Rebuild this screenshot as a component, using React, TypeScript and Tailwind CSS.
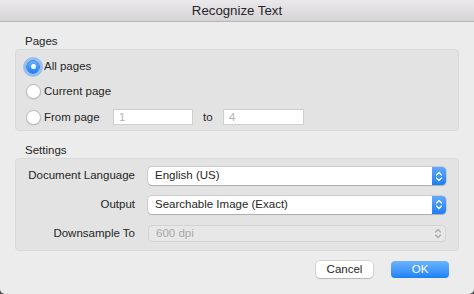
import React from "react";

const font = { fontFamily: '"Liberation Sans", Arial, sans-serif' };

function Radio({ checked }: { checked?: boolean }) {
  if (checked) {
    return (
      <div className="w-[14px] h-[14px] rounded-full shadow-[0_0_0_3px_rgba(90,160,245,0.55)] bg-gradient-to-b from-[#68b0fb] to-[#1b7ef6] border border-[#2f86f0] flex items-center justify-center">
        <div className="w-[5px] h-[5px] rounded-full bg-white" />
      </div>
    );
  }
  return (
    <div className="w-[15px] h-[15px] rounded-full bg-white border border-[#b9b9b9] shadow-[0_0.5px_1px_rgba(0,0,0,0.15)]" />
  );
}

function Chevrons({ color }: { color: string }) {
  return (
    <svg width="8" height="11" viewBox="0 0 8 11" fill="none">
      <path d="M1.5 4 L4 1.5 L6.5 4" stroke={color} strokeWidth="1.2" strokeLinecap="round" strokeLinejoin="round" />
      <path d="M1.5 7 L4 9.5 L6.5 7" stroke={color} strokeWidth="1.2" strokeLinecap="round" strokeLinejoin="round" />
    </svg>
  );
}

function Popup({ value, disabled }: { value: string; disabled?: boolean }) {
  if (disabled) {
    return (
      <div className="w-[298px] h-[17px] rounded-[4px] bg-[#e7e7e7] border border-[#d3d3d3] flex items-center justify-between">
        <span className="pl-[7px] text-[11.5px] text-[#a8a8a8] leading-none">{value}</span>
        <div className="w-[14px] flex items-center justify-center">
          <Chevrons color="#a9a9a9" />
        </div>
      </div>
    );
  }
  return (
    <div className="w-[298px] h-[18px] rounded-[4px] bg-white shadow-[0_0_0_0.5px_rgba(0,0,0,0.2),0_1px_1px_rgba(0,0,0,0.15)] flex items-stretch overflow-hidden">
      <span className="flex-1 pl-[7px] text-[11.5px] text-[#262626] leading-none flex items-center">{value}</span>
      <div className="w-[14px] bg-gradient-to-b from-[#5fa9fb] to-[#1a7ef5] flex items-center justify-center">
        <Chevrons color="#ffffff" />
      </div>
    </div>
  );
}

function TextField({ value, w }: { value: string; w: string }) {
  return (
    <div className={`${w} h-[16px] bg-white border border-[#cfcfcf] flex items-center pl-[5px] text-[11.5px] text-[#b3b3b3]`}>
      {value}
    </div>
  );
}

export default function App() {
  return (
    <div className="w-[474px] h-[294px] bg-[#4a4a4a]" style={font}>
      <div className="w-[474px] h-[294px] bg-[#ececec] rounded-b-[5px] flex flex-col overflow-hidden">
        <div className="h-[22px] shrink-0 bg-gradient-to-b from-[#ebe9eb] to-[#d5d3d5] border-b border-[#b5b5b5] flex items-center justify-center pt-[1px]">
          <span className="text-[13.25px] text-[#262626]">Recognize Text</span>
        </div>

        <div className="px-[15px] pt-[12px] flex flex-col">
          <div className="h-[15px] pl-[10px] text-[11.5px] leading-[15px] text-[#262626]">Pages</div>
          <div className="h-[82px] rounded-[4px] bg-[#e3e3e3] border border-[#dadada] pt-[4px] pl-[10px] flex flex-col">
            <div className="h-[26px] flex items-center gap-[4px]">
              <Radio checked />
              <span className="text-[11.5px] text-[#262626]">All pages</span>
            </div>
            <div className="h-[26px] flex items-center gap-[3px]">
              <Radio />
              <span className="text-[11.5px] text-[#262626]">Current page</span>
            </div>
            <div className="h-[26px] flex items-center">
              <Radio />
              <span className="ml-[3px] w-[69px] text-[11.5px] text-[#262626]">From page</span>
              <TextField value="1" w="w-[80px]" />
              <span className="w-[30px] pl-[10px] text-[11.5px] text-[#262626]">to</span>
              <TextField value="4" w="w-[81px]" />
            </div>
          </div>

          <div className="mt-[12px] h-[15px] pl-[10px] text-[11.5px] leading-[15px] text-[#262626]">Settings</div>
          <div className="h-[93px] rounded-[4px] bg-[#e3e3e3] border border-[#dadada] pt-[3px] flex flex-col">
            <div className="h-[28px] flex items-center">
              <span className="w-[119px] text-right text-[11.5px] text-[#262626]">Document Language</span>
              <div className="ml-[13px]"><Popup value="English (US)" /></div>
            </div>
            <div className="h-[29px] flex items-center">
              <span className="w-[119px] text-right text-[11.5px] text-[#262626]">Output</span>
              <div className="ml-[13px]"><Popup value="Searchable Image (Exact)" /></div>
            </div>
            <div className="h-[29px] flex items-center">
              <span className="w-[119px] text-right text-[11.5px] text-[#262626]">Downsample To</span>
              <div className="ml-[13px]"><Popup value="600 dpi" disabled /></div>
            </div>
          </div>
        </div>

        <div className="mt-[10px] pr-[25px] flex justify-end gap-[18px]">
          <div className="w-[57px] h-[17px] rounded-[4px] bg-white shadow-[0_0_0_0.5px_rgba(0,0,0,0.2),0_1px_1px_rgba(0,0,0,0.15)] flex items-center justify-center text-[11.5px] text-[#262626]">
            Cancel
          </div>
          <div className="w-[58px] h-[17px] rounded-[4px] bg-gradient-to-b from-[#6cb4fb] to-[#1a80f8] flex items-center justify-center text-[11.5px] text-white">
            OK
          </div>
        </div>
      </div>
    </div>
  );
}
